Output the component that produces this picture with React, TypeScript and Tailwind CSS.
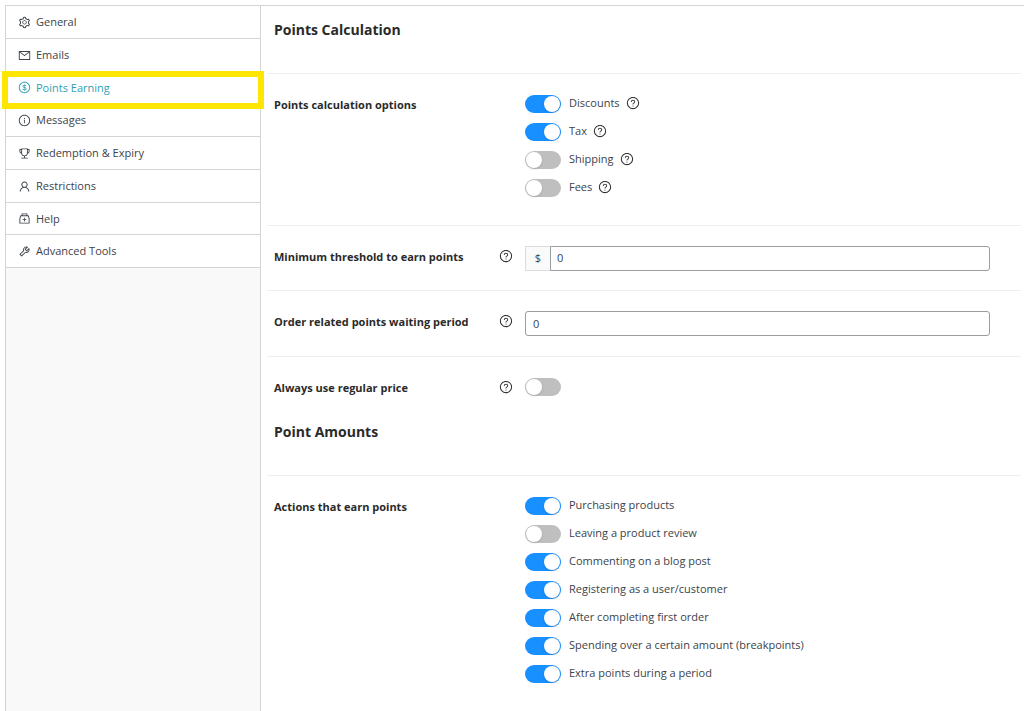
import { useId, useState, type ReactNode } from "react";
import {
  AiOutlineDollarCircle,
  AiOutlineInfoCircle,
  AiOutlineMail,
  AiOutlineMedicineBox,
  AiOutlineQuestionCircle,
  AiOutlineSetting,
  AiOutlineTool,
  AiOutlineTrophy,
  AiOutlineUser,
} from "react-icons/ai";

const tabs = [
  { label: "General", Icon: AiOutlineSetting },
  { label: "Emails", Icon: AiOutlineMail },
  { label: "Points Earning", Icon: AiOutlineDollarCircle, active: true },
  { label: "Messages", Icon: AiOutlineInfoCircle },
  { label: "Redemption & Expiry", Icon: AiOutlineTrophy },
  { label: "Restrictions", Icon: AiOutlineUser },
  { label: "Help", Icon: AiOutlineMedicineBox },
  { label: "Advanced Tools", Icon: AiOutlineTool },
];

const calculationOptions = [
  { label: "Discounts", on: true },
  { label: "Tax", on: true },
  { label: "Shipping", on: false },
  { label: "Fees", on: false },
];

const earningActions = [
  { label: "Purchasing products", on: true },
  { label: "Leaving a product review", on: false },
  { label: "Commenting on a blog post", on: true },
  { label: "Registering as a user/customer", on: true },
  { label: "After completing first order", on: true },
  { label: "Spending over a certain amount (breakpoints)", on: true },
  { label: "Extra points during a period", on: true },
];

function HelpIcon() {
  return <AiOutlineQuestionCircle className="size-3.5 shrink-0 text-[#333]" aria-hidden />;
}

function Sidebar() {
  return (
    <nav className="w-64 shrink-0 border-x border-[#d5d5d5] bg-[#f9f9f9]">
      <ul className="grid h-[262px] grid-rows-8">
        {tabs.map(({ label, Icon, active }) => (
          <li
            key={label}
            className={
              active
                ? "relative z-10 border-b border-[#d5d5d5] bg-white text-[#2e9fb3]"
                : "border-b border-[#d5d5d5] bg-white text-[#3c434a]"
            }
          >
            <a href="#" className="flex h-full items-center gap-[5px] pt-px pl-3">
              <Icon className="size-[13px] shrink-0" aria-hidden />
              {label}
            </a>
            {active && (
              <span className="pointer-events-none absolute -inset-x-1 -top-px -bottom-1.5 border-[6px] border-[#ffe600]" />
            )}
          </li>
        ))}
      </ul>
    </nav>
  );
}

function SectionTitle({ children }: { children: ReactNode }) {
  return (
    <h2 className="pt-3 pb-[31px] pl-[7px] text-sm leading-6 font-bold text-[#2a2a2a]">
      {children}
    </h2>
  );
}

function Switch({ id, label, defaultOn }: { id: string; label?: string; defaultOn: boolean }) {
  const [on, setOn] = useState(defaultOn);
  return (
    <input
      id={id}
      type="checkbox"
      role="switch"
      aria-label={label}
      checked={on}
      onChange={(e) => setOn(e.target.checked)}
      className="flex h-[18px] w-9 shrink-0 cursor-pointer appearance-none items-center rounded-full bg-[#bfbfbf] px-px before:size-4 before:rounded-full before:bg-white before:shadow-sm checked:justify-end checked:bg-[#1890ff]"
    />
  );
}

function SwitchLine({ label, on, help }: { label: string; on: boolean; help?: boolean }) {
  const id = useId();
  return (
    <div className="flex h-7 items-center">
      <Switch id={id} defaultOn={on} />
      <div className="flex items-center gap-1.5 pb-0.5 pl-2">
        <label htmlFor={id}>{label}</label>
        {help && <HelpIcon />}
      </div>
    </div>
  );
}

function Row({
  label,
  htmlFor,
  help,
  className,
  children,
}: {
  label: string;
  htmlFor?: string;
  help?: boolean;
  className: string;
  children: ReactNode;
}) {
  const text = "text-[11px] leading-[22px] font-bold text-[#2a2a2a]";
  return (
    <div className={`flex border-t border-[#eee] pl-[7px] ${className}`}>
      <div className="flex w-[225px] shrink-0">
        {htmlFor ? (
          <label htmlFor={htmlFor} className={text}>
            {label}
          </label>
        ) : (
          <h3 className={text}>{label}</h3>
        )}
      </div>
      <div className="flex h-5 w-[26px] shrink-0 items-center">{help && <HelpIcon />}</div>
      <div className="flex-1 pr-[31px]">{children}</div>
    </div>
  );
}

export default function App() {
  return (
    <div className="min-h-screen bg-white pt-[5px] pl-[5px] font-['Open_Sans','Noto_Sans',sans-serif] text-[11px] text-[#3c434a]">
      <div className="flex min-h-[calc(100vh-5px)] border-t border-[#d5d5d5]">
        <Sidebar />
        <main className="flex-1 pr-[3px] pl-1.5">
          <SectionTitle>Points Calculation</SectionTitle>
          <Row label="Points calculation options" className="pt-5 pb-[23px]">
            <div className="-mt-1">
              {calculationOptions.map((o) => (
                <SwitchLine key={o.label} label={o.label} on={o.on} help />
              ))}
            </div>
          </Row>
          <Row label="Minimum threshold to earn points" htmlFor="threshold" help className="pt-5 pb-[19px]">
            <div className="flex h-[25px]">
              <span className="flex w-[25px] items-center justify-center border border-r-0 border-[#dcdcdc] bg-[#fafafa]">
                $
              </span>
              <input
                id="threshold"
                type="text"
                defaultValue="0"
                className="min-w-0 flex-1 rounded-r-[3px] border border-[#999ca1] px-1.5 outline-none"
              />
            </div>
          </Row>
          <Row label="Order related points waiting period" htmlFor="waiting" help className="py-5">
            <input
              id="waiting"
              type="text"
              defaultValue="0"
              className="block h-[25px] w-full rounded-[3px] border border-[#999ca1] px-[7px] outline-none"
            />
          </Row>
          <Row label="Always use regular price" htmlFor="regular" help className="pt-5 pb-[7px]">
            <div className="-mt-1 flex h-7 items-center">
              <Switch id="regular" defaultOn={false} />
            </div>
          </Row>
          <SectionTitle>Point Amounts</SectionTitle>
          <Row label="Actions that earn points" className="pt-5">
            <div className="-mt-1">
              {earningActions.map((a) => (
                <SwitchLine key={a.label} label={a.label} on={a.on} />
              ))}
            </div>
          </Row>
        </main>
      </div>
    </div>
  );
}
